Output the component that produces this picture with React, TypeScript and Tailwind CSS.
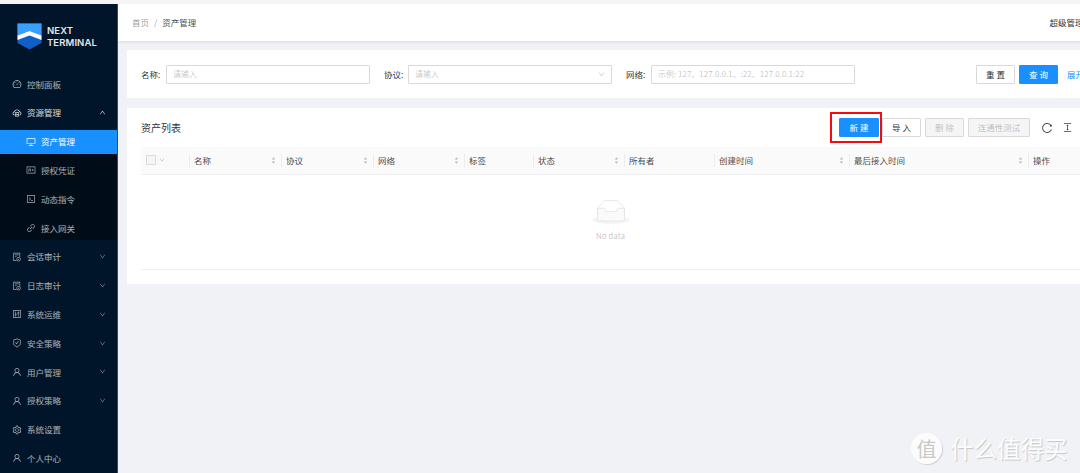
import React from "react";
import {
  AiOutlineDashboard,
  AiOutlineCloudServer,
  AiOutlineDesktop,
  AiOutlineIdcard,
  AiOutlineCode,
  AiOutlineLink,
  AiOutlineFileDone,
  AiOutlineControl,
  AiOutlineSafetyCertificate,
  AiOutlineUser,
  AiOutlineSetting,
  AiOutlineUp,
  AiOutlineDown,
  AiOutlineReload,
  AiOutlineColumnHeight,
  AiFillCaretUp,
  AiFillCaretDown,
} from "react-icons/ai";

const font = "font-['Noto_Sans_CJK_SC','Noto_Sans',sans-serif]";

type NavItem = {
  label: string;
  icon: React.ReactNode;
  arrow?: "up" | "down";
  sub?: boolean;
  active?: boolean;
  bright?: boolean;
};

const navItems: NavItem[] = [
  { label: "控制面板", icon: <AiOutlineDashboard /> },
  { label: "资源管理", icon: <AiOutlineCloudServer />, arrow: "up", bright: true },
  { label: "资产管理", icon: <AiOutlineDesktop />, sub: true, active: true },
  { label: "授权凭证", icon: <AiOutlineIdcard />, sub: true },
  { label: "动态指令", icon: <AiOutlineCode />, sub: true },
  { label: "接入网关", icon: <AiOutlineLink />, sub: true },
  { label: "会话审计", icon: <AiOutlineFileDone />, arrow: "down" },
  { label: "日志审计", icon: <AiOutlineFileDone />, arrow: "down" },
  { label: "系统运维", icon: <AiOutlineControl />, arrow: "down" },
  { label: "安全策略", icon: <AiOutlineSafetyCertificate />, arrow: "down" },
  { label: "用户管理", icon: <AiOutlineUser />, arrow: "down" },
  { label: "授权策略", icon: <AiOutlineUser />, arrow: "down" },
  { label: "系统设置", icon: <AiOutlineSetting /> },
  { label: "个人中心", icon: <AiOutlineUser /> },
];

const columns = [
  { label: "名称", width: "w-[92px]", sort: true },
  { label: "协议", width: "w-[92px]", sort: true },
  { label: "网络", width: "w-[91px]", sort: true },
  { label: "标签", width: "w-[69px]", sort: false },
  { label: "状态", width: "w-[91px]", sort: true },
  { label: "所有者", width: "w-[90px]", sort: false },
  { label: "创建时间", width: "w-[135px]", sort: true },
  { label: "最后接入时间", width: "w-[179px]", sort: true },
  { label: "操作", width: "w-[60px]", sort: false },
];

const Logo = () => (
  <svg width="25" height="27" viewBox="0 0 25 27" className="shrink-0">
    <path d="M0.5 0.5H24.5V20L12.5 26.5L0.5 20Z" fill="#0f5fc7" />
    <path d="M0.5 0.5H24.5V12.5L12.5 8L0.5 12.5Z" fill="#3aa0ff" />
    <path d="M0.5 12.5L12.5 8L24.5 12.5V17L12.5 12.5L0.5 17Z" fill="#ffffff" />
  </svg>
);

const SidebarRow = ({ item }: { item: NavItem }) => (
  <div
    className={`flex items-center h-6 mb-[4.8px] pr-[11px] ${item.sub ? "pl-[26px]" : "pl-3"} ${
      item.active ? "bg-[#1890ff] text-white" : item.bright ? "text-white/85" : "text-white/65"
    }`}
  >
    <span className="text-[10px] w-[15px] shrink-0 flex items-center">{item.icon}</span>
    <span className="text-[8.5px] flex-1 whitespace-nowrap">{item.label}</span>
    {item.arrow === "up" && <AiOutlineUp className="text-[7px]" />}
    {item.arrow === "down" && <AiOutlineDown className="text-[7px] text-white/50" />}
  </div>
);

const Field = ({
  label,
  placeholder,
  labelWidth,
  select,
}: {
  label: string;
  placeholder: string;
  labelWidth: string;
  select?: boolean;
}) => (
  <div className="flex items-center">
    <span className={`${labelWidth} shrink-0 text-[8.5px] text-black/85 whitespace-nowrap`}>{label}</span>
    <div className="w-[204px] h-[19px] border border-[#d9d9d9] bg-white rounded-[1px] flex items-center justify-between px-[6px]">
      <span className="text-[8px] text-black/25 whitespace-nowrap">{placeholder}</span>
      {select && <AiOutlineDown className="text-[7px] text-black/25" />}
    </div>
  </div>
);

const Button = ({
  children,
  kind,
  width,
}: {
  children: React.ReactNode;
  kind: "primary" | "default" | "disabled";
  width: string;
}) => {
  const look =
    kind === "primary"
      ? "bg-[#1890ff] border-[#1890ff] text-white"
      : kind === "disabled"
        ? "bg-[#f5f5f5] border-[#d9d9d9] text-black/25"
        : "bg-white border-[#d9d9d9] text-black/85";
  return (
    <div
      className={`${width} h-[19px] border rounded-[1px] flex items-center justify-center text-[8.5px] whitespace-nowrap ${look}`}
    >
      {children}
    </div>
  );
};

const SortIcon = () => (
  <span className="flex flex-col items-center text-[5px] leading-none text-black/25 -space-y-[1px]">
    <AiFillCaretUp />
    <AiFillCaretDown />
  </span>
);

const EmptyIcon = () => (
  <svg width="38" height="24" viewBox="0 0 64 41">
    <g transform="translate(0 1)" fill="none" fillRule="evenodd">
      <ellipse fill="#f5f5f5" cx="32" cy="33" rx="32" ry="7" />
      <g fillRule="nonzero" stroke="#d9d9d9">
        <path d="M55 12.76L44.854 1.258C44.367.474 43.656 0 42.907 0H21.093c-.749 0-1.46.474-1.947 1.257L9 12.761V22h46v-9.24z" />
        <path
          d="M41.613 15.931c0-1.605.994-2.93 2.227-2.931H55v18.137C55 33.26 53.68 35 52.05 35h-40.1C10.32 35 9 33.259 9 31.137V13h11.16c1.233 0 2.227 1.323 2.227 2.928v.022c0 1.605 1.005 2.901 2.237 2.901h14.752c1.232 0 2.237-1.308 2.237-2.913v-.007z"
          fill="#fafafa"
        />
      </g>
    </g>
  </svg>
);

export default function App() {
  return (
    <div className={`w-[1080px] h-[473px] overflow-hidden flex flex-col bg-[#f5f5f5] relative ${font}`}>
      <div className="h-1 shrink-0" />
      <div className="flex flex-1 min-h-0">
        {/* Sidebar */}
        <div className="w-[118px] shrink-0 bg-[#001529] overflow-hidden border-r border-[#3a4a5e]">
          <div className="flex items-center gap-[5px] pl-[17px] h-[66px] pb-[1px]">
            <Logo />
            <div className="font-['Inter',sans-serif] text-[9.5px] leading-[12px] font-semibold text-white/90 tracking-[0.1px]">
              <div>NEXT</div>
              <div>TERMINAL</div>
            </div>
          </div>
          <div className="pt-[2px]">
            {navItems.slice(0, 2).map((item) => (
              <SidebarRow key={item.label} item={item} />
            ))}
            <div className="bg-[#000c17]">
              {navItems.slice(2, 6).map((item) => (
                <SidebarRow key={item.label} item={item} />
              ))}
            </div>
            {navItems.slice(6).map((item) => (
              <SidebarRow key={item.label} item={item} />
            ))}
          </div>
        </div>

        {/* Main */}
        <div className="flex-1 min-w-0 bg-[#f0f2f5] overflow-hidden">
          <div className="w-[990px] h-[37px] bg-white shadow-[0_1px_3px_rgba(0,0,0,0.1)] flex items-center justify-between pl-[14px] pr-[16px] text-[8.5px]">
            <div className="flex items-center gap-[5px]">
              <span className="text-black/45">首页</span>
              <span className="text-black/45">/</span>
              <span className="text-black/75">资产管理</span>
            </div>
            <span className="text-black/85 whitespace-nowrap">超级管理员</span>
          </div>

          {/* Filter card */}
          <div className="ml-[9px] mt-[9px] w-[1000px] h-[48px] bg-white flex items-center pl-[14px] gap-[14px]">
            <Field label="名称:" labelWidth="w-[25px]" placeholder="请输入" />
            <Field label="协议:" labelWidth="w-[24px]" placeholder="请输入" select />
            <Field label="网络:" labelWidth="w-[25px]" placeholder="示例: 127、127.0.0.1、:22、127.0.0.1:22" />
            <div className="flex items-center gap-1 ml-[107px]">
              <Button kind="default" width="w-[39px]">重 置</Button>
              <Button kind="primary" width="w-[39px]">查 询</Button>
              <span className="ml-[5px] text-[8.5px] text-[#1890ff] whitespace-nowrap">展开</span>
            </div>
          </div>

          {/* List card */}
          <div className="ml-[9px] mt-[10px] w-[1000px] h-[176px] bg-white px-[14px]">
            <div className="h-[39px] flex items-center">
              <span className="text-[10px] text-black/85 flex-1">资产列表</span>
              <div className="flex items-center mr-[40px]">
                <div className="w-[52px] h-[31px] border-2 border-[#f50d0d] flex items-center justify-end pr-[1px]">
                  <Button kind="primary" width="w-[40px]">新 建</Button>
                </div>
                <div className="flex items-center gap-1">
                  <Button kind="default" width="w-[39px]">导 入</Button>
                  <Button kind="disabled" width="w-[39px]">删 除</Button>
                  <Button kind="disabled" width="w-[62px]">连通性测试</Button>
                </div>
                <AiOutlineReload className="ml-[11px] text-[12px] text-black/75" />
                <AiOutlineColumnHeight className="ml-[9px] text-[11px] text-black/75" />
              </div>
            </div>

            <div className="h-[28px] bg-[#fafafa] flex items-center pb-[1px] text-[8.5px] text-black/75 border-b border-[#f0f0f0]">
              <div className="w-[48px] flex items-center pl-[5px] gap-[3px]">
                <div className="w-[10px] h-[10px] border border-[#d9d9d9] bg-[#f5f5f5] rounded-[1px]" />
                <AiOutlineDown className="text-[6px] text-black/25" />
              </div>
              {columns.map((col) => (
                <div
                  key={col.label}
                  className={`${col.width} shrink-0 flex items-center justify-between pl-[4px] pr-[5px] border-l border-[#ececec] h-[13px] whitespace-nowrap`}
                >
                  <span>{col.label}</span>
                  {col.sort && <SortIcon />}
                </div>
              ))}
            </div>

            <div className="h-[95px] border-b border-[#f0f0f0] flex flex-col items-center pt-[25px] w-[939px]">
              <EmptyIcon />
              <span className="mt-[6px] text-[8px] text-black/25">No data</span>
            </div>
          </div>
        </div>
      </div>

      {/* Watermark */}
      <div className="absolute left-[911px] top-[431px] flex items-center gap-[8px] opacity-90">
        <div className="w-[31px] h-[31px] rounded-full bg-white/90 flex items-center justify-center text-[20px] text-[#c4c4c4] shadow-[1px_1px_1px_rgba(0,0,0,0.15)]">
          值
        </div>
        <span className="text-[23.5px] text-white [text-shadow:1px_1px_1px_rgba(0,0,0,0.2)] whitespace-nowrap">
          什么值得买
        </span>
      </div>
    </div>
  );
}
